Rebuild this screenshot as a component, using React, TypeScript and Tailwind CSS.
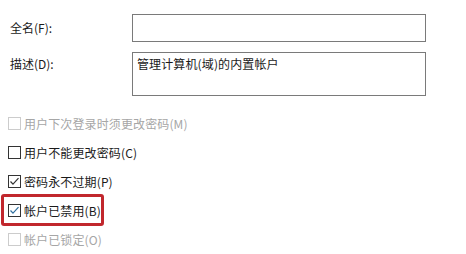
import React from "react";

const font = { fontFamily: '"Noto Sans CJK SC", "Microsoft YaHei", sans-serif' };

function Check({ color }: { color: string }) {
  return (
    <svg width="13" height="13" viewBox="0 0 13 13" className="absolute left-[-1px] top-[-1px]">
      <polyline points="2.5,6.5 5,9.2 10.5,3.2" fill="none" stroke={color} strokeWidth="1.2" />
    </svg>
  );
}

function Row({
  label,
  checked,
  disabled,
  focus,
}: {
  label: string;
  checked?: boolean;
  disabled?: boolean;
  focus?: boolean;
}) {
  return (
    <div className="relative flex h-[29px] items-center pl-[8px]">
      <span
        className={
          "relative h-[13px] w-[13px] shrink-0 border bg-white " +
          (disabled ? "border-[#cccccc]" : "border-[#333333]")
        }
      >
        {checked ? <Check color={focus ? "#2f6f9f" : "#333333"} /> : null}
      </span>
      <span
        className={
          "ml-[3px] text-[12px] leading-[16px] tracking-[0.12px] " +
          (disabled ? "text-[#a6a6a6]" : "text-[#1a1a1a]")
        }
      >
        {label}
      </span>
      {focus ? (
        <span className="pointer-events-none absolute left-[1px] top-[-2px] h-[32px] w-[103px] rounded-[3px] border-[3px] border-[#c1272d]" />
      ) : null}
    </div>
  );
}

export default function App() {
  return (
    <div className="h-[254px] w-[466px] overflow-hidden bg-white pt-[14px]" style={font}>
      <div className="flex h-[28px] items-center">
        <div className="w-[132px] pl-[10px] text-[12px] leading-[16px] text-[#1a1a1a]">全名(F):</div>
        <div className="h-[28px] w-[294px] border border-[#7a7a7a] bg-white" />
      </div>
      <div className="mt-[10px] flex">
        <div className="w-[132px] pl-[10px] pt-[4px] text-[12px] leading-[16px] text-[#1a1a1a]">描述(D):</div>
        <div className="h-[44px] w-[294px] border border-[#7a7a7a] bg-white pl-[4px] pt-[3px] text-[12px] leading-[16px] tracking-[0.12px] text-[#1a1a1a]">
          管理计算机(域)的内置帐户
        </div>
      </div>
      <div className="mt-[13px] flex flex-col">
        <Row label="用户下次登录时须更改密码(M)" disabled />
        <Row label="用户不能更改密码(C)" />
        <Row label="密码永不过期(P)" checked />
        <Row label="帐户已禁用(B)" checked focus />
        <Row label="帐户已锁定(O)" disabled />
      </div>
    </div>
  );
}
